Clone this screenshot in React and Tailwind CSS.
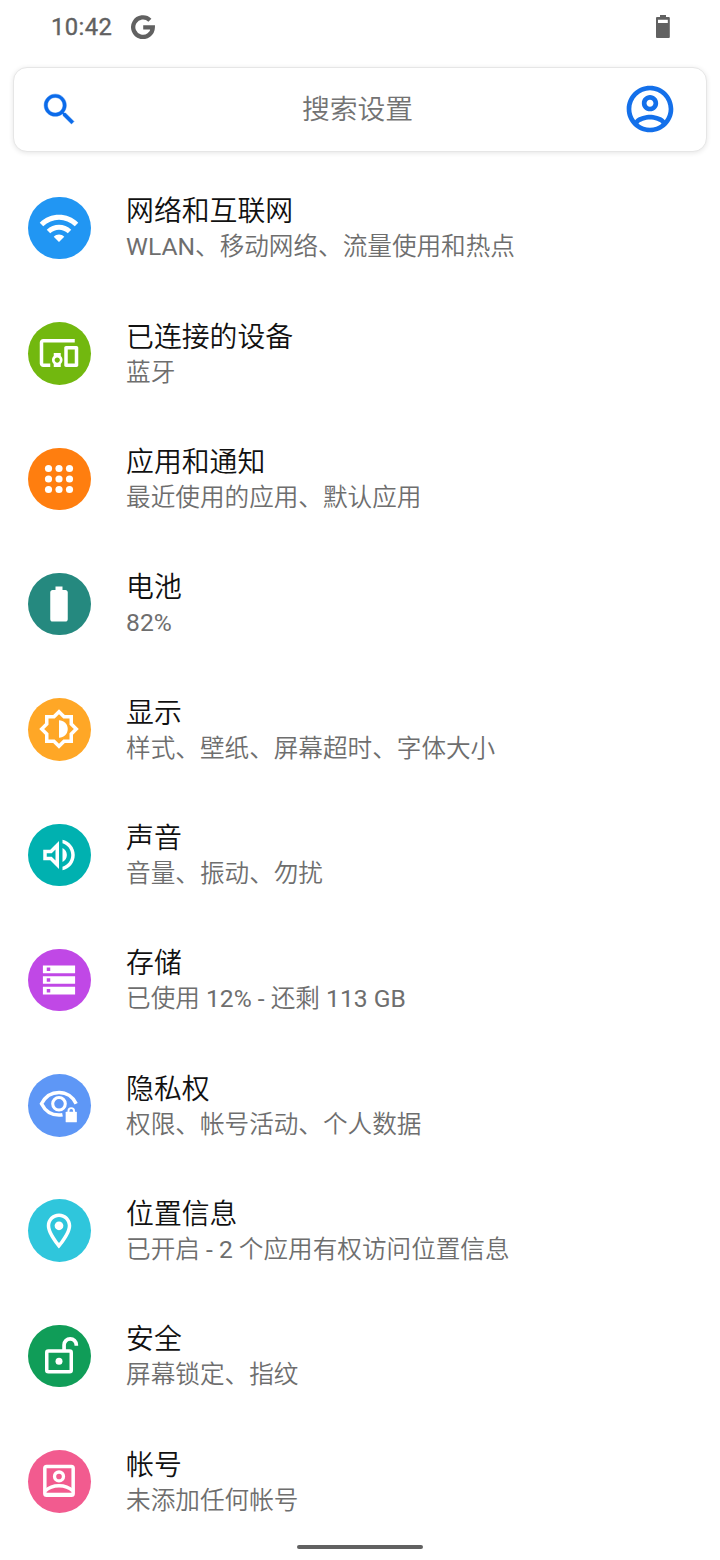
import React from "react";

const Glyph = ({ children }) => (
  <svg viewBox="0 0 24 24" className="h-[42px] w-[42px] shrink-0 overflow-visible" fill="#fff">
    {children}
  </svg>
);

const WifiIcon = () => (
  <Glyph>
    <path d="M1 9l2 2c4.97-4.97 13.03-4.97 18 0l2-2C16.93 2.93 7.08 2.93 1 9zm8 8l3 3 3-3c-1.65-1.66-4.34-1.66-6 0zm-4-4l2 2c2.76-2.76 7.24-2.76 10 0l2-2C15.14 9.14 8.87 9.14 5 13z" />
  </Glyph>
);

const DevicesIcon = () => (
  <Glyph>
    <path d="M3 6h18V4H3c-1.1 0-2 .9-2 2v12c0 1.1.9 2 2 2h4v-2H3V6zm10 6H9v1.78c-.61.55-1 1.33-1 2.22s.39 1.67 1 2.22V20h4v-1.78c.61-.55 1-1.34 1-2.22s-.39-1.67-1-2.22V12zm-2 5.5c-.83 0-1.5-.67-1.5-1.5s.67-1.5 1.5-1.5 1.5.67 1.5 1.5-.67 1.5-1.5 1.5zM22 8h-6c-.5 0-1 .5-1 1v10c0 .5.5 1 1 1h6c.5 0 1-.5 1-1V9c0-.5-.5-1-1-1zm-1 10h-4v-8h4v8z" />
  </Glyph>
);

const AppsIcon = () => (
  <Glyph>
    {[6, 12, 18].map((y) => [6, 12, 18].map((x) => <circle key={`${x}-${y}`} cx={x} cy={y} r="2.05" />))}
  </Glyph>
);

const BatteryIcon = () => (
  <Glyph>
    <path d="M15.67 4H14V2h-4v2H8.33C7.6 4 7 4.6 7 5.33v15.33C7 21.4 7.6 22 8.33 22h7.33c.74 0 1.34-.6 1.34-1.33V5.33C17 4.6 16.4 4 15.67 4z" />
  </Glyph>
);

const BrightnessIcon = () => (
  <Glyph>
    <path
      fillRule="evenodd"
      d="M20 8.69V4h-4.69L12 .69 8.69 4H4v4.69L.69 12 4 15.31V20h4.69L12 23.31 15.31 20H20v-4.69L23.31 12 20 8.69zm-2 5.79V18h-3.52L12 20.48 9.52 18H6v-3.52L3.52 12 6 9.52V6h3.52L12 3.52 14.48 6H18v3.52L20.48 12 18 14.48z"
    />
    <path d="M12 7v10c2.76 0 5-2.24 5-5s-2.24-5-5-5z" />
  </Glyph>
);

const VolumeIcon = () => (
  <Glyph>
    <path
      fillRule="evenodd"
      d="M3 9v6h4l5 5V4L7 9H3zm7-.17v6.34L7.83 13H5v-2h2.83L10 8.83zM16.5 12c0-1.77-1.02-3.29-2.5-4.03v8.05c1.48-.73 2.5-2.25 2.5-4.02zM14 3.23v2.06c2.89.86 5 3.54 5 6.71s-2.11 5.85-5 6.71v2.06c4.01-.91 7-4.49 7-8.77s-2.99-7.86-7-8.77z"
    />
  </Glyph>
);

const StorageIcon = () => (
  <Glyph>
    <path
      fillRule="evenodd"
      d="M2.8 3.7h18.4v4.4H2.8zM5 4.9v2h2v-2zM2.8 9.8h18.4v4.4H2.8zM5 11v2h2v-2zM2.8 15.9h18.4v4.4H2.8zM5 17.1v2h2v-2z"
    />
  </Glyph>
);

const PrivacyIcon = () => (
  <Glyph>
    <path
      d="M21.8 11.3C20 7.4 16.3 4.85 12 4.85S4 7.4 2 11.3C4 15.3 7.6 17.75 12 17.75c.7 0 1.3-.05 2-.2"
      fill="none"
      stroke="#fff"
      strokeWidth="2"
    />
    <circle cx="12" cy="11.3" r="3.6" fill="none" stroke="#fff" strokeWidth="1.75" />
    <rect x="15.8" y="15.9" width="6.4" height="6" rx=".4" />
    <path d="M17.4 16.2v-.8a1.6 1.6 0 0 1 3.2 0v.8" fill="none" stroke="#fff" strokeWidth="1.1" />
  </Glyph>
);

const LocationIcon = () => (
  <Glyph>
    <path d="M12 2C8.13 2 5 5.13 5 9c0 5.25 7 13 7 13s7-7.75 7-13c0-3.87-3.13-7-7-7zM7 9c0-2.76 2.24-5 5-5s5 2.24 5 5c0 2.88-2.88 7.19-5 9.88C9.92 16.21 7 11.85 7 9z" />
    <circle cx="12" cy="9" r="2.5" />
  </Glyph>
);

const SecurityIcon = () => (
  <Glyph>
    <rect x="5" y="9.2" width="14" height="11.8" rx=".9" fill="none" stroke="#fff" strokeWidth="2" />
    <path d="M14.9 9V5.7a3.5 3.5 0 0 1 7 0v.4" fill="none" stroke="#fff" strokeWidth="2.1" />
    <circle cx="12" cy="15" r="2" />
  </Glyph>
);

const AccountIcon = () => (
  <Glyph>
    <rect x="3.9" y="3.7" width="16.2" height="16.4" rx="1" fill="none" stroke="#fff" strokeWidth="2" />
    <circle cx="12" cy="9.4" r="2.55" fill="none" stroke="#fff" strokeWidth="1.9" />
    <path d="M4.2 17.6c2-2 4.9-2.9 7.8-2.9s5.8.9 7.8 2.9" fill="none" stroke="#fff" strokeWidth="1.9" />
    <path d="M4 18.7h16v1H4z" />
  </Glyph>
);

const items = [
  { title: "网络和互联网", sub: "WLAN、移动网络、流量使用和热点", bg: "bg-[#2196f3]", Icon: WifiIcon },
  { title: "已连接的设备", sub: "蓝牙", bg: "bg-[#72b80f]", Icon: DevicesIcon },
  { title: "应用和通知", sub: "最近使用的应用、默认应用", bg: "bg-[#ff7e0f]", Icon: AppsIcon },
  { title: "电池", sub: "82%", bg: "bg-[#25897f]", Icon: BatteryIcon },
  { title: "显示", sub: "样式、壁纸、屏幕超时、字体大小", bg: "bg-[#ffa726]", Icon: BrightnessIcon },
  { title: "声音", sub: "音量、振动、勿扰", bg: "bg-[#00b1b0]", Icon: VolumeIcon },
  { title: "存储", sub: "已使用 12% - 还剩 113 GB", bg: "bg-[#c048e6]", Icon: StorageIcon },
  { title: "隐私权", sub: "权限、帐号活动、个人数据", bg: "bg-[#5e97f6]", Icon: PrivacyIcon },
  { title: "位置信息", sub: "已开启 - 2 个应用有权访问位置信息", bg: "bg-[#2fc6dc]", Icon: LocationIcon },
  { title: "安全", sub: "屏幕锁定、指纹", bg: "bg-[#109d58]", Icon: SecurityIcon },
  { title: "帐号", sub: "未添加任何帐号", bg: "bg-[#f25b8f]", Icon: AccountIcon },
];

const StatusBar = () => (
  <header className="flex h-[66.5px] shrink-0 items-start justify-between pt-[14px] pr-[50px] pl-[51px] text-[#616161]">
    <div className="flex items-center">
      <span className="w-[80px] text-[23.8px] leading-[26px] font-normal tracking-[0.4px] [-webkit-text-stroke:0.35px_#616161]">
        10:42
      </span>
      <svg viewBox="0 0 24 24" className="h-6 w-6" fill="none" stroke="currentColor" strokeWidth="4.3">
        <path d="M18.9 5.2A9.8 9.8 0 1 0 21.8 12.3H12.2" />
      </svg>
    </div>
    <svg viewBox="0 0 14 23" className="mt-px h-[23px] w-[14px]" fill="currentColor">
      <path fillRule="evenodd" d="M4 0h6v2h2.8q1 0 1 1v19q0 1-1 1H1q-1 0-1-1V3q0-1 1-1h3zM2 4.7v3.3h9.8V4.7z" />
    </svg>
  </header>
);

const SearchBar = () => (
  <div className="mx-[13px] flex h-[85.5px] shrink-0 items-center justify-between rounded-[14px] border border-[#e6e6e6] bg-white pr-[28px] pl-[25px] shadow-[0_1px_5px_rgba(0,0,0,0.1)]">
    <svg viewBox="0 0 24 24" className="h-[41px] w-[41px]" fill="#0b6bea" stroke="#0b6bea" strokeWidth="0.25">
      <path d="M15.5 14h-.79l-.28-.27C15.41 12.59 16 11.11 16 9.5 16 5.91 13.09 3 9.5 3S3 5.91 3 9.5 5.91 16 9.5 16c1.61 0 3.09-.59 4.23-1.57l.27.28v.79l5 4.99L20.49 19l-4.99-5zm-6 0C7.01 14 5 11.99 5 9.5S7.01 5 9.5 5 14 7.01 14 9.5 11.99 14 9.5 14z" />
    </svg>
    <span className="mb-[4px] ml-[13px] font-['Noto_Sans_CJK_SC_DemiLight','Noto_Sans_CJK_SC',sans-serif] text-[27.8px] leading-9 text-[#737373]">
      搜索设置
    </span>
    <svg viewBox="0 0 24 24" className="-mt-px h-14 w-14" fill="#1470ea">
      <path
        fillRule="evenodd"
        d="M12 2C6.48 2 2 6.48 2 12s4.48 10 10 10 10-4.48 10-10S17.52 2 12 2zM7.07 18.28c.43-.9 3.05-1.78 4.93-1.78s4.51.88 4.93 1.78C15.57 19.36 13.86 20 12 20s-3.57-.64-4.93-1.72zm11.29-1.45c-1.43-1.74-4.9-2.33-6.36-2.33s-4.93.59-6.36 2.33C4.62 15.49 4 13.82 4 12c0-4.41 3.59-8 8-8s8 3.59 8 8c0 1.82-.62 3.49-1.64 4.83zM12 6c-1.94 0-3.5 1.56-3.5 3.5S10.06 13 12 13s3.5-1.56 3.5-3.5S13.94 6 12 6zm0 5c-.83 0-1.5-.67-1.5-1.5S11.17 8 12 8s1.5.67 1.5 1.5S12.83 11 12 11z"
      />
    </svg>
  </div>
);

const Row = ({ title, sub, bg, Icon }) => (
  <li className="flex h-[125.33px] shrink-0 items-center pl-[28px]">
    <div className={`flex h-[62.6px] w-[62.6px] shrink-0 items-center justify-center rounded-full ${bg}`}>
      <Icon />
    </div>
    <div className="ml-[35.5px] pt-[2.2px] whitespace-nowrap">
      <div className="text-[27.85px] leading-[35px] text-[#111111]">{title}</div>
      <div className="text-[24.62px] leading-[35px] text-[#6e6e6e]">{sub}</div>
    </div>
  </li>
);

export default function App() {
  return (
    <div
      lang="zh-CN"
      className="flex h-[1560px] w-[720px] flex-col overflow-hidden bg-white font-[Roboto,'Noto_Sans_CJK_SC_DemiLight','Noto_Sans_CJK_SC',sans-serif]"
    >
      <StatusBar />
      <SearchBar />
      <ul className="mt-[13.5px] flex flex-col">
        {items.map((item) => (
          <Row key={item.title} {...item} />
        ))}
      </ul>
      <div className="mx-auto mt-px h-1 w-[126px] shrink-0 rounded-full bg-[#616161]" />
    </div>
  );
}
